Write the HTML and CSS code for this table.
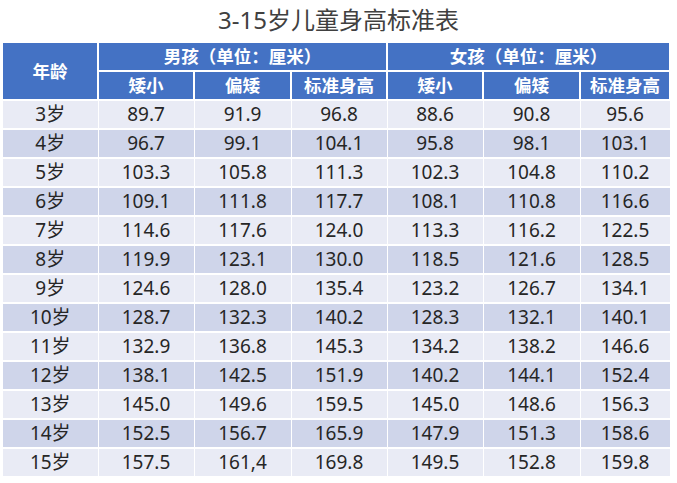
FILE: index.html
```html
<!DOCTYPE html>
<html lang="zh-CN">
<head>
<meta charset="utf-8">
<title>3-15岁儿童身高标准表</title>
<link rel="stylesheet" href="styles.css">
</head>
<body>
<div class="page">
  <h1 class="title">3-15岁儿童身高标准表</h1>
  <table class="height-table">
    <colgroup>
      <col class="c-age">
      <col class="c1"><col class="c2"><col class="c3">
      <col class="c4"><col class="c5"><col class="c6">
    </colgroup>
    <thead>
      <tr class="h1">
        <th rowspan="2" class="age-head">年龄</th>
        <th colspan="3">男孩（单位：厘米）</th>
        <th colspan="3">女孩（单位：厘米）</th>
      </tr>
      <tr class="h2">
        <th>矮小</th><th>偏矮</th><th>标准身高</th>
        <th>矮小</th><th>偏矮</th><th>标准身高</th>
      </tr>
    </thead>
    <tbody>
      <tr><td>3岁</td><td>89.7</td><td>91.9</td><td>96.8</td><td>88.6</td><td>90.8</td><td>95.6</td></tr>
      <tr><td>4岁</td><td>96.7</td><td>99.1</td><td>104.1</td><td>95.8</td><td>98.1</td><td>103.1</td></tr>
      <tr><td>5岁</td><td>103.3</td><td>105.8</td><td>111.3</td><td>102.3</td><td>104.8</td><td>110.2</td></tr>
      <tr><td>6岁</td><td>109.1</td><td>111.8</td><td>117.7</td><td>108.1</td><td>110.8</td><td>116.6</td></tr>
      <tr><td>7岁</td><td>114.6</td><td>117.6</td><td>124.0</td><td>113.3</td><td>116.2</td><td>122.5</td></tr>
      <tr><td>8岁</td><td>119.9</td><td>123.1</td><td>130.0</td><td>118.5</td><td>121.6</td><td>128.5</td></tr>
      <tr><td>9岁</td><td>124.6</td><td>128.0</td><td>135.4</td><td>123.2</td><td>126.7</td><td>134.1</td></tr>
      <tr><td>10岁</td><td>128.7</td><td>132.3</td><td>140.2</td><td>128.3</td><td>132.1</td><td>140.1</td></tr>
      <tr><td>11岁</td><td>132.9</td><td>136.8</td><td>145.3</td><td>134.2</td><td>138.2</td><td>146.6</td></tr>
      <tr><td>12岁</td><td>138.1</td><td>142.5</td><td>151.9</td><td>140.2</td><td>144.1</td><td>152.4</td></tr>
      <tr><td>13岁</td><td>145.0</td><td>149.6</td><td>159.5</td><td>145.0</td><td>148.6</td><td>156.3</td></tr>
      <tr><td>14岁</td><td>152.5</td><td>156.7</td><td>165.9</td><td>147.9</td><td>151.3</td><td>158.6</td></tr>
      <tr><td>15岁</td><td>157.5</td><td>161,4</td><td>169.8</td><td>149.5</td><td>152.8</td><td>159.8</td></tr>
    </tbody>
  </table>
</div>
</body>
</html>
```

FILE: styles.css
```css
html, body {
  margin: 0;
  padding: 0;
  background: #ffffff;
}

body {
  font-family: "Noto Sans", "Noto Sans CJK SC", sans-serif;
  color: #262626;
}

.page {
  width: 677px;
  padding: 0 0 0 3px;
  box-sizing: border-box;
}

.title {
  margin: 0;
  height: 43px;
  line-height: 40px;
  font-size: 24px;
  font-weight: 400;
  color: #404040;
  text-align: center;
  padding-right: 3px;
}

.height-table {
  width: 667px;
  table-layout: fixed;
  border-collapse: collapse;
  font-size: 19px;
}

.c-age { width: 95px; }
.c1 { width: 96px; }
.c2 { width: 97px; }
.c3 { width: 96px; }
.c4 { width: 96px; }
.c5 { width: 97px; }
.c6 { width: 90px; }

.height-table th,
.height-table td {
  border: 2px solid #ffffff;
  padding: 0;
  text-align: center;
  white-space: nowrap;
}

.height-table th {
  background: #4472c4;
  color: #ffffff;
  font-weight: 700;
  font-size: 17.5px;
  height: 27px;
  line-height: 27px;
}

.height-table tr.h1 th {
  border-top: none;
}

.height-table th:first-child,
.height-table td:first-child {
  border-left: none;
}

.height-table td {
  height: 27px;
  line-height: 27px;
  font-weight: 400;
}

.height-table tbody tr:nth-child(odd) td {
  background: #e9ebf5;
}

.height-table tbody tr:nth-child(even) td {
  background: #cfd5ea;
}

.height-table tbody tr td {
  border-left-width: 1px;
  border-right-width: 1px;
}
```
